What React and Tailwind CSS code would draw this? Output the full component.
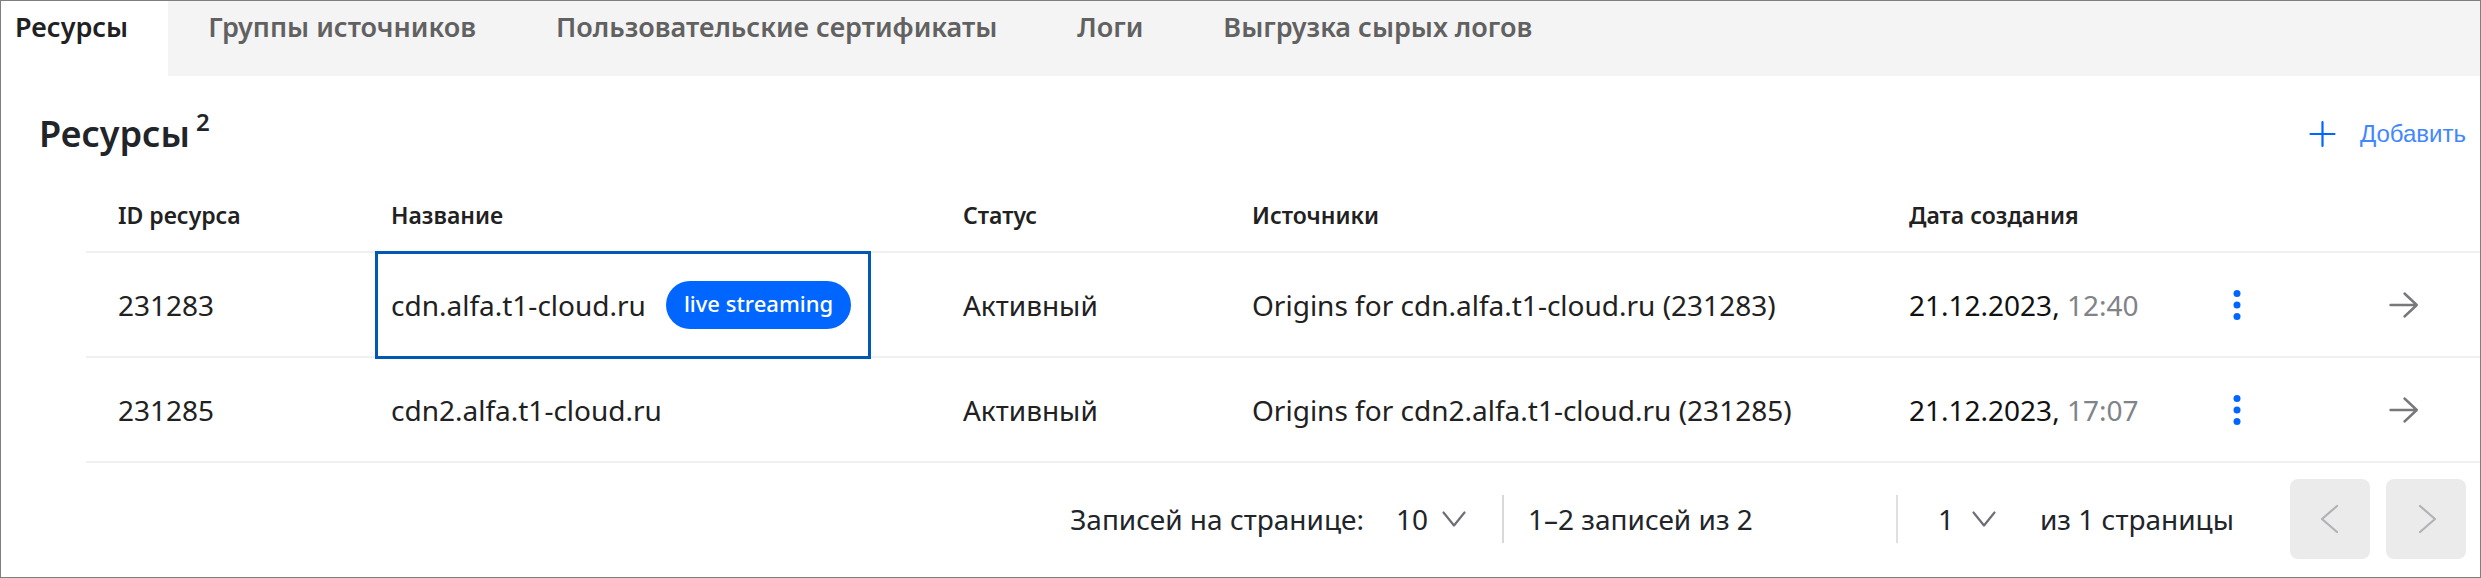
import { useState } from 'react';

const TABS = [
  'Ресурсы',
  'Группы источников',
  'Пользовательские сертификаты',
  'Логи',
  'Выгрузка сырых логов',
];

const RESOURCES = [
  {
    id: '231283',
    name: 'cdn.alfa.t1-cloud.ru',
    tag: 'live streaming',
    status: 'Активный',
    origins: 'Origins for cdn.alfa.t1-cloud.ru (231283)',
    date: '21.12.2023,',
    time: '12:40',
  },
  {
    id: '231285',
    name: 'cdn2.alfa.t1-cloud.ru',
    status: 'Активный',
    origins: 'Origins for cdn2.alfa.t1-cloud.ru (231285)',
    date: '21.12.2023,',
    time: '17:07',
  },
];

function PlusIcon() {
  return (
    <svg className="w-7 h-7" viewBox="0 0 28 28" fill="none" stroke="#0066ff" strokeWidth="2.2" strokeLinecap="round">
      <path d="M14.5 2v24M2.5 14h24" />
    </svg>
  );
}

function DotsIcon() {
  return (
    <svg className="w-8 h-8" viewBox="0 0 32 32" fill="#0066ff">
      <circle cx="16" cy="4.4" r="3.5" />
      <circle cx="16" cy="16" r="3.5" />
      <circle cx="16" cy="27.6" r="3.5" />
    </svg>
  );
}

function ArrowIcon() {
  return (
    <svg className="w-8 h-8" viewBox="0 0 32 32" fill="none" stroke="#77777c" strokeWidth="2.4" strokeLinecap="round" strokeLinejoin="round">
      <path d="M2.5 16h26M16.5 4.5L28.8 16 16.5 27.5" />
    </svg>
  );
}

function Chevron({ className, d }) {
  return (
    <svg className={className} viewBox="0 0 32 32" fill="none" strokeWidth="2.2" strokeLinecap="round" strokeLinejoin="round">
      <path d={d} />
    </svg>
  );
}

function PagerSelect({ id, label, options, value, onChange, className }) {
  return (
    <div className={`relative ${className}`}>
      <select
        id={id}
        aria-label={label}
        value={value}
        onChange={(e) => onChange(e.target.value)}
        className="w-full appearance-none bg-transparent"
      >
        {options.map((option) => (
          <option key={option}>{option}</option>
        ))}
      </select>
      <Chevron
        className="absolute right-0 top-1/2 w-8 h-8 -translate-y-1/2 pointer-events-none stroke-[#6e6e76]"
        d="M5.5 9.5L16 22.5l10.5-13"
      />
    </div>
  );
}

export default function App() {
  const [tab, setTab] = useState(TABS[0]);
  const [perPage, setPerPage] = useState('10');
  const [page, setPage] = useState('1');

  return (
    <div className="min-h-screen border border-[#7f7f7f] bg-white text-[28px] leading-9 text-[#212121] font-['Noto_Sans',sans-serif]">
      {/* Tabs */}
      <nav className="flex bg-[#f4f4f4] text-[27px]">
        {TABS.map((item) => (
          <button
            key={item}
            onClick={() => setTab(item)}
            className={`pt-2 pb-[31px] pr-10 font-semibold whitespace-nowrap ${
              item === tab ? 'bg-white pl-3.5 text-[#212121]' : 'pl-10 text-[#616161]'
            }`}
          >
            {item}
          </button>
        ))}
      </nav>

      {/* Header */}
      <div className="flex items-center justify-between pt-[38px] pl-9.5 pr-3.5">
        <h1 className="flex gap-1.5 text-4xl font-semibold text-[#212529]">
          Ресурсы
          <span className="text-2xl leading-4">2</span>
        </h1>
        <button className="flex items-center gap-6 text-2xl text-[#4287ff] font-['Liberation_Sans',sans-serif]">
          <PlusIcon />
          Добавить
        </button>
      </div>

      {/* Resources table */}
      <div className="pl-[85px] pt-6">
        <table className="w-full table-fixed text-left">
          <colgroup>
            <col className="w-[273px]" />
            <col />
            <col className="w-[289px]" />
            <col className="w-[657px]" />
            <col className="w-[300px]" />
            <col className="w-[120px]" />
            <col className="w-[183px]" />
          </colgroup>
          <thead>
            <tr className="h-[74px] border-b-2 border-[#f0f0f0] text-[23px]">
              <th className="pl-8 font-semibold">ID ресурса</th>
              <th className="pl-8 font-semibold">Название</th>
              <th className="pl-8 font-semibold">Статус</th>
              <th className="pl-8 font-semibold">Источники</th>
              <th className="pl-8 font-semibold">Дата создания</th>
              <th></th>
              <th></th>
            </tr>
          </thead>
          <tbody>
            {RESOURCES.map((item) => (
              <tr key={item.id} className="h-[105px] border-b-2 border-[#f0f0f0]">
                <td className="pl-8">{item.id}</td>
                <td className="pl-8">
                  {item.tag ? (
                    <div className="relative inline-flex items-center gap-5 h-12">
                      {item.name}
                      <span className="h-12 px-4.5 rounded-full bg-[#0066ff] text-[22px] leading-11 font-medium text-white">
                        {item.tag}
                      </span>
                      {/* row highlight */}
                      <div className="absolute -left-4 -right-5 -inset-y-[30px] border-3 border-[#0059b3]"></div>
                    </div>
                  ) : (
                    item.name
                  )}
                </td>
                <td className="pl-8">{item.status}</td>
                <td className="pl-8">{item.origins}</td>
                <td className="pl-8 text-[#111111]">
                  {item.date} <span className="text-[#808388]">{item.time}</span>
                </td>
                <td>
                  <button aria-label="Действия" className="block mx-auto">
                    <DotsIcon />
                  </button>
                </td>
                <td>
                  <button aria-label="Открыть" className="block ml-auto mr-[60px]">
                    <ArrowIcon />
                  </button>
                </td>
              </tr>
            ))}
          </tbody>
        </table>
      </div>

      {/* Pagination */}
      <div className="flex items-center justify-end pt-4 pr-3.5 text-[#212529]">
        <label htmlFor="per-page">Записей на странице:</label>
        <PagerSelect
          id="per-page"
          options={['10', '20', '50']}
          value={perPage}
          onChange={setPerPage}
          className="w-[74px] ml-8"
        />
        <div className="w-[394px] h-12 ml-8 pl-6 border-l-2 border-[#d8d8d8] flex items-center">
          1–2 записей из 2
        </div>
        <div className="h-12 pl-10 border-l-2 border-[#e0e0e0] flex items-center">
          <PagerSelect
            label="Страница"
            options={['1']}
            value={page}
            onChange={setPage}
            className="w-[62px]"
          />
        </div>
        <span className="ml-10">из 1 страницы</span>
        <div className="flex gap-4 ml-14">
          <button disabled aria-label="Назад" className="flex items-center justify-center w-20 h-20 rounded-lg bg-[#ebebeb]">
            <Chevron className="w-8 h-8 stroke-[#b0b2b6]" d="M23 3L8 16l15 13" />
          </button>
          <button disabled aria-label="Вперёд" className="flex items-center justify-center w-20 h-20 rounded-lg bg-[#ebebeb]">
            <Chevron className="w-8 h-8 stroke-[#b0b2b6]" d="M10 3l15 13-15 13" />
          </button>
        </div>
      </div>
    </div>
  );
}
